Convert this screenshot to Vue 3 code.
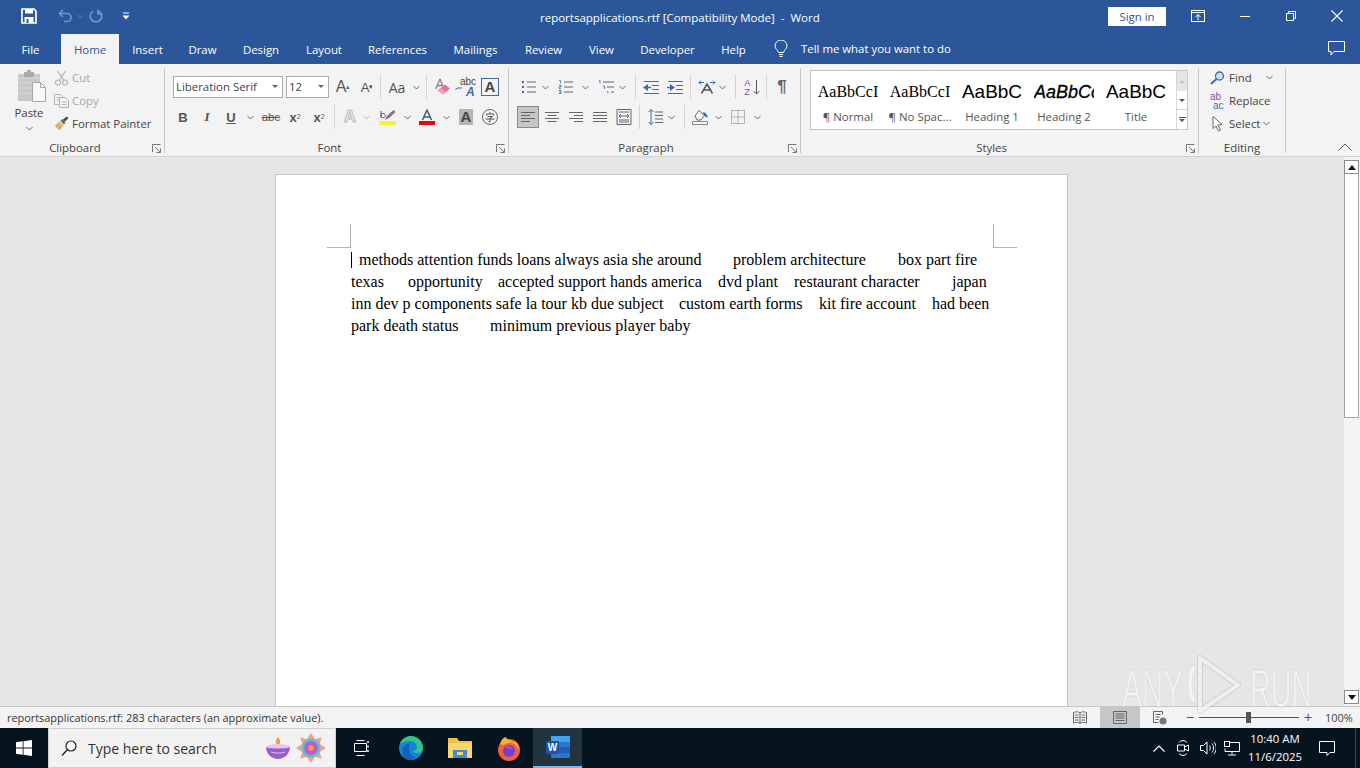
<script setup>
const tabs = [
  { name: 'File', w: 61 },
  { name: 'Home', w: 58, active: true },
  { name: 'Insert', w: 57 },
  { name: 'Draw', w: 53 },
  { name: 'Design', w: 64 },
  { name: 'Layout', w: 62 },
  { name: 'References', w: 85 },
  { name: 'Mailings', w: 71 },
  { name: 'Review', w: 65 },
  { name: 'View', w: 51 },
  { name: 'Developer', w: 81 },
  { name: 'Help', w: 51 }
]

const styleItems = [
  { label: '¶ Normal', preview: 'AaBbCcI', cls: 'serif' },
  { label: '¶ No Spac...', preview: 'AaBbCcI', cls: 'serif' },
  { label: 'Heading 1', preview: 'AaBbC', cls: 'head' },
  { label: 'Heading 2', preview: 'AaBbCc', cls: 'head2' },
  { label: 'Title', preview: 'AaBbC', cls: 'head' }
]

// word uses tabs in the rtf, widths are the distance to the next run
const lines = [
  [
    { w: 8, caret: true },
    { w: 374, t: 'methods attention funds loans always asia she around' },
    { w: 165, t: 'problem architecture' },
    { w: 90, t: 'box part fire' }
  ],
  [
    { w: 57, t: 'texas' },
    { w: 90, t: 'opportunity' },
    { w: 220, t: 'accepted support hands america' },
    { w: 76, t: 'dvd plant' },
    { w: 158, t: 'restaurant character' },
    { w: 40, t: 'japan' }
  ],
  [
    { w: 328, t: 'inn dev p components safe la tour kb due subject' },
    { w: 140, t: 'custom earth forms' },
    { w: 113, t: 'kit fire account' },
    { w: 60, t: 'had been' }
  ],
  [
    { w: 139, t: 'park death status' },
    { w: 210, t: 'minimum previous player baby' }
  ]
]
</script>

<template>
  <div class="word">
    <header class="titlebar">
      <div class="qat">
        <svg class="qat-save" width="16" height="16" viewBox="0 0 16 16">
          <path d="M1 1h12l2 2v12H1z" fill="none" stroke="#fff" stroke-width="1.7" />
          <rect x="4" y="1" width="8" height="4.5" fill="#fff" />
          <rect x="3.5" y="9" width="9" height="6" fill="#fff" />
          <rect x="5.5" y="11" width="2" height="4" fill="#2b579a" />
        </svg>
        <svg class="qat-undo" width="16" height="14" viewBox="0 0 16 14">
          <path d="M5 1L1.5 4.5 5 8M2 4.5h7a4 4 0 0 1 0 8H6" fill="none" stroke="#7193c6" stroke-width="1.7" />
        </svg>
        <svg class="qat-chev" width="7" height="5" viewBox="0 0 7 5">
          <path d="M1 1l2.5 2.5L6 1" fill="none" stroke="#5c80b8" />
        </svg>
        <svg class="qat-redo" width="16" height="15" viewBox="0 0 16 15">
          <path d="M5 2.200A5.800 5.800 0 1 0 11 2.200M10 0.500v4.500h4.500" fill="none" stroke="#7193c6" stroke-width="1.700" />
        </svg>
        <svg class="qat-more" width="8" height="8" viewBox="0 0 8 8">
          <path d="M1 1h6" stroke="#fff" />
          <path d="M0.500 3.500h7L4 7.500z" fill="#fff" />
        </svg>
      </div>
      <div class="doc-title">reportsapplications.rtf [Compatibility Mode]&nbsp; -&nbsp; Word</div>
      <button type="button" class="sign-in">Sign in</button>
      <svg class="win-display" width="14" height="12" viewBox="0 0 14 12">
        <rect x="0.500" y="0.500" width="13" height="11" fill="none" stroke="#fff" />
        <path d="M0.500 2.500h13M7 10V4.500M4.500 7L7 4.500 9.500 7" fill="none" stroke="#fff" />
      </svg>
      <svg class="win-min" width="10" height="1" viewBox="0 0 10 1"><path d="M0 0.500h10" stroke="#fff" /></svg>
      <svg class="win-max" width="10" height="10" viewBox="0 0 10 10">
        <path d="M0.500 2.500h7v7h-7zM2.500 2.500v-2h7v7h-2" fill="none" stroke="#fff" />
      </svg>
      <svg class="win-close" width="12" height="12" viewBox="0 0 12 12">
        <path d="M0.500 0.500l11 11M11.500 0.500l-11 11" stroke="#fff" stroke-width="1.100" />
      </svg>
    </header>

    <nav class="tabbar">
      <div
        v-for="tab in tabs"
        :key="tab.name"
        class="tab"
        :class="{ active: tab.active }"
        :style="{ width: tab.w + 'px' }"
      >{{ tab.name }}</div>
      <svg class="bulb" width="14" height="18" viewBox="0 0 14 18">
        <path d="M4.500 12.500C4 10 1 9 1 6a6 6 0 0 1 12 0c0 3-3 4-3.500 6.500z" fill="none" stroke="#fff" />
        <path d="M5 14.500h4M5.500 16.500h3" stroke="#fff" />
      </svg>
      <div class="tell-me">Tell me what you want to do</div>
      <svg class="comment" width="17" height="15" viewBox="0 0 17 15">
        <path d="M0.500 0.500h16v10H6l-3 3.500v-3.500H0.500z" fill="none" stroke="#fff" />
      </svg>
    </nav>

    <section class="ribbon">
      <div class="group clipboard">
        <div class="clip-body">
          <div class="paste">
            <svg class="paste-icon" width="30" height="34" viewBox="0 0 30 34">
              <rect x="1" y="5" width="22" height="27" fill="#c8c8c8" />
              <path d="M1 9h22M1 14h22M1 19h14M1 24h14" stroke="#d8d8d8" />
              <rect x="7" y="3" width="10" height="5" rx="1" fill="#a9a9a9" />
              <rect x="10" y="1" width="4" height="3" fill="#a9a9a9" />
              <path d="M15.500 13.500h8l5 5v14h-13z" fill="#f8f8f8" stroke="#a6a6a6" />
              <path d="M23.500 13.500v5h5" fill="none" stroke="#a6a6a6" />
            </svg>
            <span class="paste-label">Paste</span>
            <svg class="chev" width="7" height="5" viewBox="0 0 7 5"><path d="M0.500 1l3 3 3-3" fill="none" stroke="#666" /></svg>
          </div>
          <div class="clip-actions">
            <div class="clip-row off">
              <svg width="14" height="16" viewBox="0 0 14 16">
                <path d="M3 1l6.500 9.500M11 1L4.500 10.500" stroke="#b4b4b4" stroke-width="1.300" />
                <circle cx="3.500" cy="12.500" r="2.500" fill="none" stroke="#b4b4b4" stroke-width="1.200" />
                <circle cx="10.500" cy="12.500" r="2.500" fill="none" stroke="#b4b4b4" stroke-width="1.200" />
              </svg>
              <span>Cut</span>
            </div>
            <div class="clip-row off">
              <svg width="15" height="14" viewBox="0 0 15 14">
                <path d="M0.500 0.500h6l2 2v8h-8zM2.500 3.500h4M2.500 6h4" fill="none" stroke="#b4b4b4" />
                <path d="M5.500 3.500h6l3 3v7h-9z" fill="#f3f3f3" stroke="#b4b4b4" />
                <path d="M7.500 8h5M7.500 10.500h5" stroke="#b4b4b4" />
              </svg>
              <span>Copy</span>
            </div>
            <div class="clip-row">
              <svg width="15" height="15" viewBox="0 0 15 15">
                <path d="M0.500 9.500L6 5l4 4.500-4.500 5z" fill="#e5bf7e" />
                <path d="M2 11l3-2.500M4 13l3-3" stroke="#b78f4e" />
                <path d="M6.500 4.500l2-1.500 3 3.500-1.500 2z" fill="#666" />
                <path d="M9 3.500L13 0.500l1.500 1.500-3.500 3.500z" fill="#444" />
              </svg>
              <span>Format Painter</span>
            </div>
          </div>
        </div>
        <div class="group-label">Clipboard</div>
        <svg class="launcher" width="9" height="9" viewBox="0 0 9 9"><path d="M0.500 8V0.500H8.500M3 3l5 5M8.500 4.500v4h-4" fill="none" stroke="#777" /></svg>
      </div>
      <div class="sep"></div>

      <div class="group font">
        <div class="row row-one">
          <div class="combo font-name">Liberation Serif<i></i></div>
          <div class="combo font-size">12<i></i></div>
          <div class="b grow-a">A<sup class="mark">▴</sup></div>
          <div class="b shrink-a">A<sup class="mark">▾</sup></div>
          <div class="vr m-aa"></div>
          <div class="b aa">Aa</div>
          <div class="c"><svg width="7" height="5" viewBox="0 0 7 5"><path d="M0.500 1l3 3 3-3" fill="none" stroke="#666" /></svg></div>
          <div class="vr m-clear"></div>
          <div class="b">
            <svg width="18" height="18" viewBox="0 0 18 18">
              <path d="M7 1L2.500 11M7 1l3 7M4 7.500h5" fill="none" stroke="#8d7d92" stroke-width="1.300" />
              <path d="M4.500 12.500L12 6.500l5 4-7 6z" fill="#e8718f" />
              <path d="M4.500 12.500l3-2.400 5 4-2.500 2.400z" fill="#efa6b9" />
            </svg>
          </div>
          <div class="b">
            <span class="abc">abc</span>
            <span class="abc-a">A</span>
            <svg class="abc-arrow" width="7" height="6" viewBox="0 0 7 6"><path d="M7 1H2L0.500 3" fill="none" stroke="#3f6aa6" /></svg>
          </div>
          <div class="b"><span class="a-box">A</span></div>
        </div>
        <div class="row row-two font-two">
          <div class="b bold">B</div>
          <div class="b ital">I</div>
          <div class="b under">U</div>
          <div class="c"><svg width="7" height="5" viewBox="0 0 7 5"><path d="M0.500 1l3 3 3-3" fill="none" stroke="#666" /></svg></div>
          <div class="b strike m2">abc</div>
          <div class="b script">x<sub>2</sub></div>
          <div class="b script">x<sup>2</sup></div>
          <div class="vr m-fx"></div>
          <div class="b fx">A</div>
          <div class="c w8"><svg width="7" height="5" viewBox="0 0 7 5"><path d="M0.500 1l3 3 3-3" fill="none" stroke="#bbb" /></svg></div>
          <div class="b m-hi">
            <svg width="18" height="17" viewBox="0 0 18 17">
              <rect x="0" y="12" width="17" height="4" fill="#fbf02e" />
              <path d="M6 11l2-4 6.500-6 2 2-6.500 6z" fill="#777" />
              <path d="M2 8.500V2M2 6.500a2.200 2.200 0 1 1 0 .1" fill="none" stroke="#555" />
            </svg>
          </div>
          <div class="c"><svg width="7" height="5" viewBox="0 0 7 5"><path d="M0.500 1l3 3 3-3" fill="none" stroke="#666" /></svg></div>
          <div class="b m-col">
            <svg width="16" height="16" viewBox="0 0 16 16">
              <path d="M3.500 11L8 1l4.500 10M5 8h6" fill="none" stroke="#445c72" stroke-width="1.500" />
              <rect x="0" y="12" width="16" height="4" fill="#e00b0b" />
            </svg>
          </div>
          <div class="c"><svg width="7" height="5" viewBox="0 0 7 5"><path d="M0.500 1l3 3 3-3" fill="none" stroke="#666" /></svg></div>
          <div class="b m-sh"><span class="a-shade">A</span></div>
          <div class="b">
            <svg width="16" height="16" viewBox="0 0 16 16">
              <circle cx="8" cy="8" r="7.500" fill="none" stroke="#666" />
              <path d="M8 3v1.500M4.500 6.500V5h7v1.500M5.500 7.500h5L8 9.500M3.500 10h9M8 9.500V13l-1.500-.5" fill="none" stroke="#555" />
            </svg>
          </div>
        </div>
        <div class="group-label">Font</div>
        <svg class="launcher" width="9" height="9" viewBox="0 0 9 9"><path d="M0.500 8V0.500H8.500M3 3l5 5M8.500 4.500v4h-4" fill="none" stroke="#777" /></svg>
      </div>
      <div class="sep"></div>

      <div class="group para">
        <div class="row row-one">
          <div class="b">
            <svg width="16" height="14" viewBox="0 0 16 14">
              <rect x="1" y="1" width="2" height="2" fill="#3f6aa6" /><rect x="1" y="6" width="2" height="2" fill="#3f6aa6" /><rect x="1" y="11" width="2" height="2" fill="#3f6aa6" />
              <path d="M6 2h9M6 7h9M6 12h9" stroke="#666" />
            </svg>
          </div>
          <div class="c w8"><svg width="7" height="5" viewBox="0 0 7 5"><path d="M0.500 1l3 3 3-3" fill="none" stroke="#666" /></svg></div>
          <div class="b m-num">
            <svg width="16" height="14" viewBox="0 0 16 14">
              <path d="M1 0.500h1.500v3M1 5.500h2v1.500H1v1.500h2M1 10.500h2v3H1M1 12h2" fill="none" stroke="#3f6aa6" stroke-width="0.800" />
              <path d="M6 2h9M6 7h9M6 12h9" stroke="#666" />
            </svg>
          </div>
          <div class="c"><svg width="7" height="5" viewBox="0 0 7 5"><path d="M0.500 1l3 3 3-3" fill="none" stroke="#666" /></svg></div>
          <div class="b m-multi">
            <svg width="17" height="14" viewBox="0 0 17 14">
              <path d="M1 0.500h1v3M5 6h1.500v3M9 11.500h1v2" fill="none" stroke="#3f6aa6" stroke-width="0.800" />
              <path d="M5 2h11M9 7h7M13 12h3" stroke="#666" />
            </svg>
          </div>
          <div class="c w8"><svg width="7" height="5" viewBox="0 0 7 5"><path d="M0.500 1l3 3 3-3" fill="none" stroke="#666" /></svg></div>
          <div class="vr m-dec"></div>
          <div class="b">
            <svg width="17" height="13" viewBox="0 0 17 13">
              <path d="M0 6.500L5 3v7z" fill="#3f6aa6" /><path d="M4 6.500h4" stroke="#3f6aa6" stroke-width="1.500" />
              <path d="M1 0.500h15M9 4.500h7M9 8.500h7M1 12.500h15" stroke="#666" />
            </svg>
          </div>
          <div class="b">
            <svg width="17" height="13" viewBox="0 0 17 13">
              <path d="M8 6.500L3 3v7z" fill="#3f6aa6" /><path d="M0 6.500h4" stroke="#3f6aa6" stroke-width="1.500" />
              <path d="M1 0.500h15M9 4.500h7M9 8.500h7M1 12.500h15" stroke="#666" />
            </svg>
          </div>
          <div class="vr m-dir"></div>
          <div class="b">
            <svg width="18" height="14" viewBox="0 0 18 14">
              <path d="M3.500 13.500L9 4l5.500 9.500M5.500 10h7" fill="none" stroke="#555" stroke-width="1.500" />
              <path d="M6 2.500H1M3 0.500l-2 2 2 2M12 2.500h5M15 0.500l2 2-2 2" fill="none" stroke="#3f6aa6" />
            </svg>
          </div>
          <div class="c w7"><svg width="7" height="5" viewBox="0 0 7 5"><path d="M0.500 1l3 3 3-3" fill="none" stroke="#666" /></svg></div>
          <div class="vr m-sort"></div>
          <div class="b sort">
            <span class="az">A<br />Z</span>
            <svg width="7" height="15" viewBox="0 0 7 15"><path d="M3.500 0v14M0.500 11l3 3 3-3" fill="none" stroke="#555" /></svg>
          </div>
          <div class="vr m-pil"></div>
          <div class="b pilcrow">¶</div>
        </div>
        <div class="row row-two">
          <div class="b align-on">
            <svg width="14" height="11" viewBox="0 0 14 11"><path d="M0 0.500h14M0 3.500h9M0 6.500h14M0 9.500h9" stroke="#666" /></svg>
          </div>
          <div class="b">
            <svg width="14" height="11" viewBox="0 0 14 11"><path d="M0 0.500h14M2.500 3.500h9M0 6.500h14M2.500 9.500h9" stroke="#666" /></svg>
          </div>
          <div class="b">
            <svg width="14" height="11" viewBox="0 0 14 11"><path d="M0 0.500h14M5 3.500h9M0 6.500h14M5 9.500h9" stroke="#666" /></svg>
          </div>
          <div class="b">
            <svg width="14" height="11" viewBox="0 0 14 11"><path d="M0 0.500h14M0 3.500h14M0 6.500h14M0 9.500h14" stroke="#666" /></svg>
          </div>
          <div class="b">
            <svg width="16" height="16" viewBox="0 0 16 16">
              <path d="M1 0.500h14v15H1z" fill="none" stroke="#666" />
              <path d="M3 3h10M3 11h10M3 13h10" stroke="#666" />
              <path d="M3 7h10M5 5L3 7l2 2M11 5l2 2-2 2" fill="none" stroke="#3f6aa6" />
            </svg>
          </div>
          <div class="vr m-ls"></div>
          <div class="b">
            <svg width="15" height="16" viewBox="0 0 15 16">
              <path d="M3 0.500v15M0.500 3L3 0.500 5.500 3M0.500 13L3 15.500 5.500 13" fill="none" stroke="#3f6aa6" />
              <path d="M7 3h8M7 6.500h8M7 10h8M7 13.500h8" stroke="#666" />
            </svg>
          </div>
          <div class="c w8"><svg width="7" height="5" viewBox="0 0 7 5"><path d="M0.500 1l3 3 3-3" fill="none" stroke="#666" /></svg></div>
          <div class="vr m-sh2"></div>
          <div class="b">
            <svg width="17" height="16" viewBox="0 0 17 16">
              <path d="M3 7l4-5.500 5.500 5-3.500 4.500H5z" fill="none" stroke="#666" />
              <path d="M11 3c2 0 5 3 4.500 6L12 6.500z" fill="#3f6aa6" />
              <path d="M0.500 12.500h15v3H0.500z" fill="none" stroke="#888" />
            </svg>
          </div>
          <div class="c w12"><svg width="7" height="5" viewBox="0 0 7 5"><path d="M0.500 1l3 3 3-3" fill="none" stroke="#666" /></svg></div>
          <div class="b m-bd">
            <svg width="14" height="14" viewBox="0 0 14 14">
              <path d="M0.500 0.500h13v13h-13zM7 0.500v13M0.500 7h13" fill="none" stroke="#777" stroke-dasharray="1 1" />
            </svg>
          </div>
          <div class="c"><svg width="7" height="5" viewBox="0 0 7 5"><path d="M0.500 1l3 3 3-3" fill="none" stroke="#666" /></svg></div>
        </div>
        <div class="group-label">Paragraph</div>
        <svg class="launcher" width="9" height="9" viewBox="0 0 9 9"><path d="M0.500 8V0.500H8.500M3 3l5 5M8.500 4.500v4h-4" fill="none" stroke="#777" /></svg>
      </div>
      <div class="sep"></div>

      <div class="group styles">
        <div class="gallery">
          <div v-for="item in styleItems" :key="item.label" class="style-item">
            <div class="preview" :class="item.cls">{{ item.preview }}</div>
            <div class="style-label">{{ item.label }}</div>
          </div>
          <div class="gallery-scroll">
            <div class="gs gs-up"><i class="tri up"></i></div>
            <div class="gs gs-down"><i class="tri"></i></div>
            <div class="gs gs-more"><b></b><i class="tri"></i></div>
          </div>
        </div>
        <div class="group-label">Styles</div>
        <svg class="launcher" width="9" height="9" viewBox="0 0 9 9"><path d="M0.500 8V0.500H8.500M3 3l5 5M8.500 4.500v4h-4" fill="none" stroke="#777" /></svg>
      </div>
      <div class="sep"></div>

      <div class="group editing">
        <div class="edit-rows">
          <div class="edit-row">
            <svg width="15" height="14" viewBox="0 0 15 14">
              <circle cx="9.500" cy="5" r="4" fill="#cfe0f3" stroke="#3f6aa6" stroke-width="1.300" />
              <path d="M6.500 8L1 13" stroke="#3f6aa6" stroke-width="2" />
            </svg>
            <span>Find</span>
            <svg class="find-chev" width="7" height="5" viewBox="0 0 7 5"><path d="M0.500 1l3 3 3-3" fill="none" stroke="#666" /></svg>
          </div>
          <div class="edit-row">
            <span class="ab"><em>ab</em><em class="ac">ac</em></span>
            <span>Replace</span>
          </div>
          <div class="edit-row">
            <svg width="15" height="16" viewBox="0 0 15 16">
              <path d="M3 0.500v12l3-2.500 2.500 5 2-1L8 9l4-.5z" fill="#fff" stroke="#666" />
            </svg>
            <span>Select</span>
            <svg class="sel-chev" width="7" height="5" viewBox="0 0 7 5"><path d="M0.500 1l3 3 3-3" fill="none" stroke="#666" /></svg>
          </div>
        </div>
        <div class="group-label">Editing</div>
      </div>
      <div class="sep"></div>
      <svg class="collapse" width="14" height="8" viewBox="0 0 14 8"><path d="M0.500 7.500L7 1l6.500 6.500" fill="none" stroke="#555" /></svg>
    </section>

    <main class="workspace">
      <div class="canvas">
        <article class="page">
          <i class="crop crop-l"></i>
          <i class="crop crop-r"></i>
          <div v-for="(line, i) in lines" :key="i" class="line">
            <span
              v-for="(run, j) in line"
              :key="j"
              class="run"
              :class="{ caret: run.caret }"
              :style="{ width: run.w + 'px' }"
            >{{ run.t }}</span>
          </div>
        </article>
      </div>
      <aside class="vscroll">
        <div class="sb-btn"><i class="tri up dark"></i></div>
        <div class="sb-thumb"></div>
        <div class="sb-track"></div>
        <div class="sb-btn"><i class="tri dark"></i></div>
      </aside>
    </main>

    <footer class="statusbar">
      <span class="status-text">reportsapplications.rtf: 283 characters (an approximate value).</span>
      <div class="views">
        <div class="view">
          <svg width="14" height="13" viewBox="0 0 14 13">
            <path d="M0.500 1.500C3 0.500 5.500 0.500 7 2c1.500-1.500 4-1.500 6.500-.5v10.500C11 11 8.500 11 7 12.500 5.500 11 3 11 0.500 12zM7 2v10.500M2 4h3.500M2 6.500h3.500M2 9h3.500M8.500 4H12M8.500 6.500H12M8.500 9H12" fill="none" stroke="#666" />
          </svg>
        </div>
        <div class="view on">
          <svg width="14" height="13" viewBox="0 0 14 13">
            <path d="M0.500 0.500h13v12h-13zM2.500 3h9M2.500 5h9M2.500 7h9M2.500 9.500h9" fill="none" stroke="#666" />
          </svg>
        </div>
        <div class="view">
          <svg width="14" height="14" viewBox="0 0 14 14">
            <path d="M0.500 0.500h9v3M0.500 0.500v11h5M2.500 3.500h5M2.500 6h4M2.500 8.500h3" fill="none" stroke="#666" />
            <circle cx="10" cy="10" r="3.500" fill="#777" />
          </svg>
        </div>
      </div>
      <div class="zoom">
        <span class="zoom-sign">−</span>
        <div class="slider"><i></i></div>
        <span class="zoom-sign">+</span>
      </div>
      <span class="zoom-val">100%</span>
    </footer>

    <footer class="taskbar">
      <svg class="start" width="16" height="16" viewBox="0 0 16 16">
        <path d="M0 2.200L6.700 1.300v6.300H0zM7.500 1.200L16 0v7.600H7.500zM0 8.400h6.700v6.300L0 13.800zM7.500 8.400H16V16l-8.500-1.200z" fill="#fff" />
      </svg>
      <div class="search">
        <svg width="16" height="17" viewBox="0 0 16 17">
          <circle cx="10" cy="6" r="5" fill="none" stroke="#222" stroke-width="1.200" />
          <path d="M6.500 9.500L1 15.500" stroke="#222" stroke-width="1.400" />
        </svg>
        <span class="search-text">Type here to search</span>
        <svg class="diya" width="26" height="24" viewBox="0 0 26 24">
          <path d="M13 1c3 4 3 6 0 8-3-2-3-4 0-8z" fill="#f0a030" />
          <ellipse cx="13" cy="11" rx="12" ry="3" fill="#e6c6ef" />
          <path d="M1 11c2 2 22 2 24 0 0 7-6 12-12 12S1 18 1 11z" fill="#9a5cc8" />
          <path d="M6 16c4 1.500 10 1.500 14 0" stroke="#e3c7f3" fill="none" />
        </svg>
        <svg class="rangoli" width="30" height="30" viewBox="0 0 28 28">
          <g fill="#f2a386">
            <path d="M14 0l4 6h-8z" /><path d="M14 28l4-6h-8z" /><path d="M0 14l6-4v8z" /><path d="M28 14l-6-4v8z" />
            <path d="M4 4l7 2-5 5z" /><path d="M24 4l-7 2 5 5z" /><path d="M4 24l7-2-5-5z" /><path d="M24 24l-7-2 5-5z" />
          </g>
          <circle cx="14" cy="14" r="9" fill="#5ac3d2" />
          <circle cx="14" cy="14" r="6.500" fill="#c25bc7" />
          <circle cx="14" cy="14" r="2.500" fill="#f0a04b" />
        </svg>
      </div>
      <div class="task task-view">
        <svg width="15" height="16" viewBox="0 0 15 16">
          <path d="M2.500 0.500h8M2.500 15.500h8M0.500 3.500h12v8H0.500z" fill="none" stroke="#fff" />
          <path d="M14 1v2M14 5.500v2M14 10v2" stroke="#fff" stroke-width="1.500" />
        </svg>
      </div>
      <div class="task">
        <svg width="24" height="24" viewBox="0 0 24 24">
          <circle cx="12" cy="12" r="12" fill="#1583d8" />
          <path d="M1 8C3 1 10 0 12 0c6 0 12 5 12 12 0 4-3 5-6 5-2.500 0-4-1-4-2 2 0 4-1 4-3.500C18 8 15 5 11 5 6 5 3 7 1 8z" fill="#36c37f" />
          <path d="M10 14c0 4 3 7 7 7-2 2-3.500 3-5 3C6 24 2 18 4 12c1-3 5-5 7-4-1 1-1 3-1 6z" fill="#0f64b8" />
        </svg>
      </div>
      <div class="task">
        <svg width="24" height="22" viewBox="0 0 24 22">
          <path d="M0 1h9l2 3h13v17H0z" fill="#f2c43f" />
          <path d="M0 6h24v15H0z" fill="#f7d66b" />
          <path d="M5 13h14v8H5z" fill="#3f8dd6" />
          <path d="M9 15h6v3H9z" fill="#f7d66b" />
        </svg>
      </div>
      <div class="task">
        <svg width="24" height="25" viewBox="0 0 24 25">
          <circle cx="12" cy="14" r="11" fill="#f2603a" />
          <path d="M3 8c1-4 4-7 6-7 0 3 5 2 7 5 4-1 6 4 6 8-3-6-7-8-10-7-5 1-6 3-9 1z" fill="#fbb02f" />
          <circle cx="12" cy="15" r="6" fill="#7a3dc8" />
          <path d="M8 11c3-2 7 0 8 3-2-1-5-1-8-3z" fill="#c04ec4" />
        </svg>
      </div>
      <div class="task word-task">
        <svg width="24" height="22" viewBox="0 0 24 22">
          <rect x="5" y="0" width="19" height="22" rx="1" fill="#2f76c8" />
          <rect x="5" y="0" width="19" height="6" fill="#41a5ee" />
          <rect x="5" y="11" width="19" height="6" fill="#1c5fb0" />
          <rect x="0" y="5" width="13" height="13" rx="1" fill="#1a55a8" />
          <text x="6.500" y="15" class="w-mark">W</text>
        </svg>
      </div>
      <div class="tray">
        <svg class="tray-up" width="12" height="7" viewBox="0 0 12 7"><path d="M0.500 6.500L6 1l5.500 5.500" fill="none" stroke="#fff" stroke-width="1.200" /></svg>
        <svg class="tray-meet" width="12" height="16" viewBox="0 0 12 16">
          <path d="M2 2.500c2-2.500 6-2.500 8 0M2 13.500c2 2.500 6 2.500 8 0" fill="none" stroke="#fff" />
          <path d="M0.500 5h7v6h-7zM7.500 7l4-2v6l-4-2" fill="none" stroke="#fff" />
        </svg>
        <svg class="tray-vol" width="16" height="14" viewBox="0 0 16 14">
          <path d="M0.500 4.500h3L7 1v12L3.500 9.500h-3z" fill="none" stroke="#fff" />
          <path d="M9.500 4.500c1 1.500 1 3.500 0 5M12 2.500c2 2.500 2 6.500 0 9M14 1c3 3.500 3 8.500 0 12" fill="none" stroke="#fff" />
        </svg>
        <svg class="tray-net" width="16" height="15" viewBox="0 0 16 15">
          <path d="M5 1.500h10.500v9H1v-3M8 10.500v3M4 14h8" fill="none" stroke="#fff" />
          <rect x="0.500" y="0.500" width="5" height="5" fill="#06141f" stroke="#fff" />
        </svg>
        <div class="clock">
          <div>10:40 AM</div>
          <div>11/6/2025</div>
        </div>
        <svg class="tray-note" width="16" height="15" viewBox="0 0 16 15">
          <path d="M0.500 0.500h15v11H11l-3 3v-3H0.500z" fill="none" stroke="#fff" />
        </svg>
        <i class="peek"></i>
      </div>
    </footer>

    <div class="watermark" aria-hidden="true">
      <span class="wm-text wm-any">ANY</span>
      <svg class="wm-play" width="56" height="60" viewBox="0 0 56 60">
        <path d="M7 12C2 20 2 38 7 46" fill="none" stroke="rgba(255,255,255,0.55)" stroke-width="3" />
        <path d="M13 3L51 30 13 56z" fill="none" stroke="rgba(150,150,150,0.28)" stroke-width="6" stroke-linejoin="round" />
        <path d="M13 3L51 30 13 56z" fill="none" stroke="rgba(255,255,255,0.65)" stroke-width="4" stroke-linejoin="round" />
      </svg>
      <span class="wm-text wm-run">RUN</span>
    </div>
  </div>
</template>

<style scoped>
.word {
  position: relative;
  display: flex;
  flex-direction: column;
  width: 1360px;
  height: 768px;
  overflow: hidden;
  font-family: "Open Sans", "Noto Sans", sans-serif;
  font-size: 11.400px;
  color: #444;
  background: #e6e6e6;
}

.titlebar {
  display: flex;
  align-items: center;
  height: 32px;
  background: #2b579a;
  color: #fff;
}

.qat {
  display: flex;
  align-items: center;
  width: 540px;
  padding-left: 21px;
  box-sizing: border-box;
}

.qat-undo { margin-left: 21px; }
.qat-chev { margin-left: 3px; }
.qat-redo { margin-left: 4px; }
.qat-more { margin-left: 18px; }

.doc-title {
  width: 568px;
  margin-top: 2px;
  white-space: nowrap;
  font-size: 11.500px;
}

.sign-in {
  width: 58px;
  height: 19px;
  padding: 0;
  border: none;
  background: #fff;
  color: #2b579a;
  font: inherit;
  line-height: 19px;
}

.win-display { margin-left: 25px; }
.win-min { margin-left: 35px; }
.win-max { margin-left: 36px; }
.win-close { margin-left: 35px; }

.tabbar {
  display: flex;
  align-items: flex-end;
  height: 32px;
  background: #2b579a;
  color: #fff;
}

.tab {
  height: 30px;
  line-height: 31px;
  text-align: center;
  white-space: nowrap;
}

.tab.active {
  background: #f3f3f3;
  color: #2b579a;
}

.bulb {
  margin: 0 0 6px 15px;
}

.tell-me {
  width: 527px;
  margin-left: 13px;
  height: 30px;
  line-height: 30px;
  white-space: nowrap;
}

.comment {
  margin-bottom: 8px;
}

.ribbon {
  display: flex;
  align-items: flex-start;
  height: 93px;
  box-sizing: border-box;
  padding-top: 4px;
  background: #f3f3f3;
  border-bottom: 1px solid #d2d2d2;
}

.group {
  position: relative;
  height: 85px;
  flex: none;
}

.sep {
  flex: none;
  width: 1px;
  height: 85px;
  background: #c6c6c6;
}

.group-label {
  position: absolute;
  left: 0;
  right: 0;
  top: 73px;
  height: 14px;
  line-height: 14px;
  text-align: center;
  white-space: nowrap;
}

.clipboard .group-label { right: 14px; }
.font .group-label { right: 14px; }
.para .group-label { right: 17px; }
.styles .group-label { right: 16px; }

.launcher {
  position: absolute;
  right: 3px;
  top: 76px;
}

.clipboard { width: 164px; }
.font { width: 343px; padding-left: 8px; box-sizing: border-box; }
.para { width: 291px; padding-left: 8px; box-sizing: border-box; }
.styles { width: 397px; }
.editing { width: 86px; }

.clip-body {
  display: flex;
}

.paste {
  display: flex;
  flex-direction: column;
  align-items: center;
  width: 34px;
  margin: 1px 0 0 12px;
}

.paste-icon {
  margin-left: 5px;
}

.paste-label {
  margin-top: 1px;
  line-height: 17px;
}

.paste .chev {
  margin-top: 5px;
}

.clip-actions {
  margin: -2px 0 0 8px;
}

.clip-row {
  display: flex;
  align-items: center;
  height: 23px;
  white-space: nowrap;
}

.clip-row svg {
  flex: none;
  width: 15px;
  margin-right: 3px;
}

.clip-row.off {
  color: #a6a6a6;
}

.row {
  display: flex;
  align-items: center;
  height: 22px;
}

.row-one { margin-top: 8px; }
.row-two { margin-top: 8px; }
.font-two { margin-left: -2px; }

.b {
  position: relative;
  display: flex;
  flex: none;
  align-items: center;
  justify-content: center;
  width: 24px;
  height: 22px;
}

.c {
  display: flex;
  flex: none;
  align-items: center;
  justify-content: center;
  width: 14px;
  height: 22px;
}

.c.w7 { width: 7px; }
.c.w8 { width: 8px; }
.c.w12 { width: 12px; }

.vr {
  flex: none;
  width: 1px;
  height: 24px;
  background: #d2d2d2;
}

.combo {
  position: relative;
  flex: none;
  height: 22px;
  box-sizing: border-box;
  padding-left: 2px;
  background: #fff;
  border: 1px solid #ababab;
  line-height: 19px;
  white-space: nowrap;
}

.combo i {
  position: absolute;
  right: 4px;
  top: 8px;
  border: 3px solid transparent;
  border-top: 3px solid #666;
  border-bottom: none;
}

.font-name { width: 110px; }
.font-size { width: 43px; margin-left: 3px; }

.grow-a, .shrink-a {
  font-family: "Liberation Sans", sans-serif;
  color: #555;
}

.grow-a { margin-left: 2px; font-size: 16px; }
.shrink-a { font-size: 13px; }

.mark {
  font-size: 7px;
  line-height: 0;
  vertical-align: 7px;
  color: #3f6aa6;
}

.shrink-a .mark { color: #444; }

.aa { font-size: 14px; color: #555; }

.m-aa { margin-left: 1px; margin-right: 4px; }
.m-clear { margin-left: 3px; margin-right: 3px; }
.m-fx { margin-left: 3px; margin-right: 3px; }
.m-hi { margin-left: 6px; }
.m-col { margin-left: 1px; }
.m-sh { margin-left: 1px; }
.m2 { margin-left: 2px; }

.abc {
  position: absolute;
  left: 6px;
  top: 1px;
  font: 10px/10px "Liberation Sans", sans-serif;
  color: #444;
}

.abc-a {
  position: absolute;
  left: 12px;
  top: 11px;
  font: italic bold 12px/11px "Liberation Sans", sans-serif;
  color: #3f6aa6;
}

.abc-arrow {
  position: absolute;
  left: 1px;
  top: 11px;
}

.a-box {
  display: block;
  width: 16px;
  height: 16px;
  border: 1px solid #3f6aa6;
  color: #444;
  text-align: center;
  font: bold 15px/16px "Liberation Sans", sans-serif;
}

.bold, .under, .script, .strike {
  font-family: "Liberation Sans", sans-serif;
  color: #555;
}

.bold { font-weight: 700; font-size: 13px; }
.ital { font: italic 700 13px "Liberation Serif", serif; color: #555; }
.under { font-weight: 700; font-size: 13px; text-decoration: underline; }
.strike { font-size: 11.500px; text-decoration: line-through; }
.script { font-weight: 700; font-size: 13px; }
.script sub, .script sup { font-size: 7px; font-weight: 400; line-height: 0; }

.fx {
  font: bold 17px "Liberation Sans", sans-serif;
  color: #f3f3f3;
  -webkit-text-stroke: 1px #bcbcbc;
}

.a-shade {
  display: block;
  width: 14px;
  height: 16px;
  background: #b4b4b4;
  color: #444;
  text-align: center;
  font: bold 15px/16px "Liberation Sans", sans-serif;
}

.m-num { margin-left: 5px; }
.m-multi { margin-left: 2px; }
.m-dec { margin-left: 9px; margin-right: 3px; }
.m-dir { margin-left: 3px; margin-right: 4px; }
.m-sort { margin-left: 9px; margin-right: 4px; }
.m-pil { margin-left: 2px; margin-right: 3px; }
.m-ls { margin-left: 3px; margin-right: 3px; }
.m-sh2 { margin-left: 9px; margin-right: 3px; }
.m-bd { margin-left: 2px; }

.sort { gap: 2px; }

.az {
  font: 9.500px/9px "Liberation Sans", sans-serif;
  color: #7e57a8;
}

.pilcrow {
  font: bold 17px "Liberation Sans", sans-serif;
  color: #666;
}

.align-on {
  width: 22px;
  margin-right: 1px;
  background: #c6c6c6;
  box-sizing: border-box;
  border: 1px solid #8c8c8c;
}

.gallery {
  display: flex;
  width: 378px;
  height: 60px;
  box-sizing: border-box;
  margin: 2px 0 0 9px;
  padding-left: 1px;
  background: #fff;
  border: 1px solid #c6c6c6;
}

.style-item {
  flex: none;
  width: 72px;
  text-align: center;
  overflow: hidden;
}

.preview {
  height: 37px;
  line-height: 42px;
  color: #000;
  white-space: nowrap;
}

.preview.serif { font: 16px/42px "Liberation Serif", serif; }
.preview.head { font: 19px/42px "Liberation Sans", sans-serif; }
.preview.head2 {
  width: 60px;
  margin-left: 6px;
  overflow: hidden;
  text-align: left;
  font: italic 18px/42px "Liberation Sans", sans-serif;
  -webkit-text-stroke: 0.3px #000;
}

.style-label {
  height: 20px;
  line-height: 18px;
  color: #555;
  white-space: nowrap;
}

.gallery-scroll {
  display: flex;
  flex-direction: column;
  width: 13px;
  margin-left: 4px;
}

.gs {
  display: flex;
  flex-direction: column;
  align-items: center;
  justify-content: center;
  gap: 1px;
  box-sizing: border-box;
  border-left: 1px solid #d6d6d6;
}

.gs-up { height: 20px; background: #e6e6e6; }
.gs-down { height: 19px; border-bottom: 1px solid #d6d6d6; }
.gs-more { height: 19px; }

.gs b {
  width: 7px;
  height: 1px;
  background: #555;
}

.tri {
  width: 0;
  height: 0;
  border: 3px solid transparent;
  border-top: 3px solid #555;
  border-bottom: none;
}

.tri.up {
  border-top: none;
  border-bottom: 3px solid #c4c4c4;
}

.tri.dark {
  border-width: 5px 4px 0;
  border-top-color: #111;
}

.tri.up.dark {
  border-width: 0 4px 5px;
  border-bottom-color: #111;
}

.edit-rows {
  margin-top: -2px;
  padding-left: 11px;
}

.edit-row {
  display: flex;
  align-items: center;
  height: 23px;
  white-space: nowrap;
}

.edit-row > svg:first-child, .ab {
  flex: none;
  width: 15px;
  margin-right: 4px;
}

.find-chev { margin-left: 14px; }
.sel-chev { margin-left: 3px; }

.ab {
  display: flex;
  flex-direction: column;
  font: 10px/9px "Liberation Sans", sans-serif;
  color: #7e57a8;
}

.ab em { font-style: normal; }
.ab .ac { margin-left: 3px; color: #3f6aa6; }

.collapse {
  margin: 75px 0 0 52px;
}

.workspace {
  display: flex;
  height: 550px;
  border-bottom: 1px solid #c6c6c6;
  box-sizing: border-box;
}

.canvas {
  flex: 1;
  overflow: hidden;
  background: #e6e6e6;
}

.page {
  position: relative;
  width: 793px;
  height: 1056px;
  box-sizing: border-box;
  margin: 17px 0 0 275px;
  padding: 74px 0 0 75px;
  background: #fff;
  border: 1px solid #c6c6c6;
  font-family: "Liberation Serif", serif;
  font-size: 16px;
  color: #000;
}

.crop {
  position: absolute;
  top: 49px;
  width: 24px;
  height: 24px;
  box-sizing: border-box;
  border-bottom: 1px solid #b4b4b4;
}

.crop-l {
  left: 51px;
  border-right: 1px solid #b4b4b4;
}

.crop-r {
  left: 717px;
  border-left: 1px solid #b4b4b4;
}

.line {
  display: flex;
  height: 22px;
  line-height: 22px;
  white-space: nowrap;
}

.run {
  flex: none;
}

.caret {
  height: 16px;
  margin-top: 3px;
  box-sizing: border-box;
  border-left: 1px solid #000;
}

.vscroll {
  display: flex;
  flex-direction: column;
  flex: none;
  width: 16px;
  box-sizing: border-box;
  padding-top: 3px;
  padding-bottom: 2px;
  background: #f3f3f3;
}

.sb-btn {
  display: flex;
  align-items: center;
  justify-content: center;
  flex: none;
  width: 15px;
  height: 14px;
  box-sizing: border-box;
  background: #fff;
  border: 1px solid #8a8a8a;
}

.sb-thumb {
  flex: none;
  width: 15px;
  height: 244px;
  box-sizing: border-box;
  background: #fff;
  border: 1px solid #a6a6a6;
  border-top: none;
}

.sb-track {
  flex: 1;
}

.statusbar {
  display: flex;
  align-items: center;
  height: 21px;
  background: #f3f3f3;
  color: #444;
}

.status-text {
  width: 1060px;
  flex: none;
  padding-left: 7px;
  box-sizing: border-box;
  font-size: 10.900px;
  color: #333;
  white-space: nowrap;
}

.views {
  display: flex;
}

.view {
  display: flex;
  align-items: center;
  justify-content: center;
  width: 40px;
  height: 21px;
}

.view.on {
  background: #c6c6c6;
}

.zoom {
  display: flex;
  align-items: center;
  margin-left: 3px;
}

.zoom-sign {
  width: 14px;
  text-align: center;
  font: 14px/21px "Liberation Sans", sans-serif;
  color: #555;
}

.slider {
  position: relative;
  width: 100px;
  height: 1px;
  margin: 0 2px;
  background: #555;
}

.slider i {
  position: absolute;
  left: 47px;
  top: -5px;
  width: 5px;
  height: 11px;
  background: #555;
}

.zoom-val {
  margin-left: 10px;
  font-size: 10.900px;
}

.taskbar {
  display: flex;
  align-items: center;
  height: 40px;
  background: #06141f;
  color: #fff;
}

.start {
  margin-left: 16px;
  margin-right: 16px;
  flex: none;
}

.search {
  display: flex;
  align-items: center;
  flex: none;
  width: 288px;
  height: 40px;
  box-sizing: border-box;
  padding-left: 12px;
  background: #f2f2f2;
  border: 1px solid #cfcfcf;
  color: #333;
}

.search-text {
  width: 177px;
  flex: none;
  margin-left: 11px;
  font-size: 14px;
  white-space: nowrap;
}

.diya { flex: none; margin-left: 0; }
.rangoli { flex: none; margin-left: 5px; }

.task {
  display: flex;
  align-items: center;
  justify-content: center;
  flex: none;
  width: 49px;
  height: 40px;
  box-sizing: border-box;
}

.task-view {
  width: 50px;
}

.word-task {
  background: #22343f;
  border-bottom: 2px solid #76b9ed;
}

.w-mark {
  font: bold 10px "Liberation Sans", sans-serif;
  fill: #fff;
  text-anchor: middle;
}

.tray {
  display: flex;
  align-items: center;
  flex: 1;
  padding-left: 571px;
}

.tray svg { flex: none; }
.tray-meet { margin-left: 12px; }
.tray-vol { margin-left: 11px; }
.tray-net { margin-left: 8px; }

.clock {
  width: 70px;
  margin-left: 0;
  text-align: center;
  font-size: 11.400px;
  line-height: 18px;
  white-space: nowrap;
}

.tray-note { margin-left: 9px; }

.peek {
  flex: none;
  width: 1px;
  height: 40px;
  margin-left: 20px;
  background: #3a4650;
}

.watermark {
  position: absolute;
  left: 1122px;
  top: 655px;
  display: flex;
  align-items: center;
  pointer-events: none;
}

.wm-text {
  display: block;
  font: 54px/60px "Liberation Sans", sans-serif;
  color: rgba(255, 255, 255, 0.5);
  -webkit-text-stroke: 0.5px rgba(150, 150, 150, 0.45);
  transform-origin: left center;
}

.wm-any { width: 65px; transform: translateY(3px) scaleX(0.55); }
.wm-run { width: 60px; margin-left: 7px; transform: translateY(3px) scaleX(0.53); }
.wm-play { flex: none; }
</style>

<style>
html, body { margin: 0; }
</style>
